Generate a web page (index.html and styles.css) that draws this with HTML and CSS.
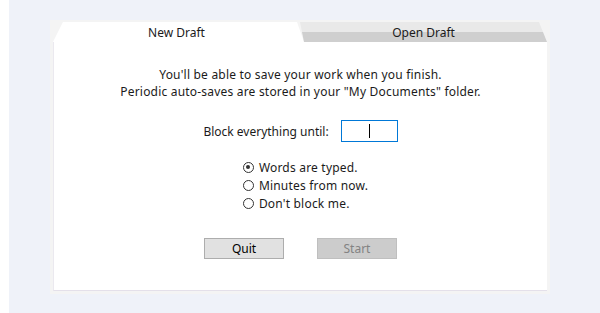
FILE: index.html
```html
<!DOCTYPE html>
<html lang="en">
<head>
    <meta charset="UTF-8">
    <title>Draft</title>
    <link rel="stylesheet" href="styles.css">
</head>
<body>
    <div class="screen">
        <div class="panel">
            <!-- Tabs -->
            <div class="tabs">
                <div class="tab active">New Draft</div>
                <div class="tab">Open Draft</div>
            </div>

            <!-- New draft page -->
            <div class="page">
                <p class="intro">You'll be able to save your work when you finish.<br>Periodic auto-saves are stored in your "My Documents" folder.</p>

                <div class="block-row">
                    <span>Block everything until:</span>
                    <div class="field"><span class="caret"></span></div>
                </div>

                <div class="options">
                    <div class="option"><span class="radio checked"></span>Words are typed.</div>
                    <div class="option"><span class="radio"></span>Minutes from now.</div>
                    <div class="option"><span class="radio"></span>Don't block me.</div>
                </div>

                <div class="buttons">
                    <button class="btn">Quit</button>
                    <button class="btn disabled">Start</button>
                </div>
            </div>
        </div>
    </div>
</body>
</html>
```

FILE: styles.css
```css
/* Page */
body {
    margin: 0 0 0 9px;
    font-family: "Noto Sans", "Open Sans", sans-serif;
    font-size: 12px;
    color: #1b1b1b;
    background: #ffffff;
}

.screen {
    height: 313px;
    background: #eff2f9;
    padding: 20px 0 0 41px;
    box-sizing: border-box;
}

/* Panel */
.panel {
    width: 500px;
    background: #f4f4f4;
    padding: 2px 3px 3px;
    box-sizing: border-box;
}

/* Tabs */
.tabs {
    display: flex;
    height: 20px;
}

.tab {
    flex: 1;
    text-align: center;
    line-height: 21px;
    background: linear-gradient(to bottom, #e9e9e9 50%, #cfcfcf 50%);
    clip-path: polygon(0 0, calc(100% - 8px) 0, 100% 100%, 4px 100%);
}

.tab.active {
    background: #ffffff;
    clip-path: polygon(0 100%, 10px 0, calc(100% - 7px) 0, 100% 100%);
    margin-right: -4px;
    padding-right: 4px;
    position: relative;
}

/* Content */
.page {
    background: #ffffff;
    height: 249px;
    border-left: 1px solid #ebe9ef;
    border-bottom: 1px solid #e4e0ea;
    box-sizing: border-box;
    display: flex;
    flex-direction: column;
    align-items: center;
}

.intro {
    margin: 24px 0 0;
    line-height: 17px;
    letter-spacing: 0.2px;
    text-align: center;
}

.block-row {
    display: flex;
    align-items: center;
    gap: 12px;
    margin-top: 20px;
}

.field {
    width: 57px;
    height: 22px;
    border: 1px solid #0078d7;
    box-sizing: border-box;
    display: flex;
    justify-content: center;
    align-items: center;
}

.caret {
    width: 1px;
    height: 14px;
    background: #000000;
}

.options {
    margin-top: 16px;
    margin-left: 10px;
}

.option {
    display: flex;
    align-items: center;
    height: 18px;
    letter-spacing: 0.2px;
}

.radio {
    width: 11px;
    height: 11px;
    border: 1px solid #333333;
    border-radius: 50%;
    box-sizing: border-box;
    margin-right: 5px;
    display: flex;
    justify-content: center;
    align-items: center;
}

.radio.checked::after {
    content: "";
    width: 4px;
    height: 4px;
    border-radius: 50%;
    background: #333333;
}

.buttons {
    display: flex;
    gap: 33px;
    margin-top: 26px;
}

.btn {
    width: 80px;
    height: 21px;
    font: inherit;
    color: #000000;
    background: #e1e1e1;
    border: 1px solid #adadad;
    padding: 0;
}

.btn.disabled {
    color: #838383;
    background: #cccccc;
    border-color: #bfbfbf;
}
```
